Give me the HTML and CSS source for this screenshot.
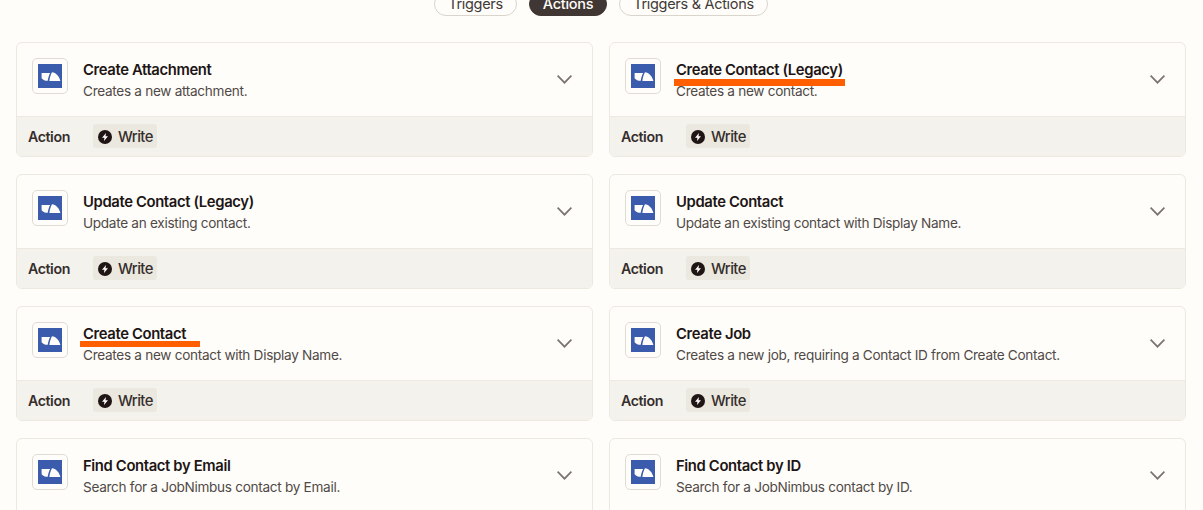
FILE: index.html
```html
<!DOCTYPE html>
<html lang="en">
<head>
<meta charset="utf-8">
<title>JobNimbus actions</title>
<link rel="stylesheet" href="styles.css">
</head>
<body>
<svg class="defs" width="0" height="0" aria-hidden="true">
  <symbol id="jn" viewBox="0 0 24 24">
    <rect width="24" height="24" fill="#3b5cad"/>
    <path d="M3.6 9H12.2C11 11 10.2 13.6 9.7 16.8C7 16.8 4.8 15.8 3.6 14.2Z" fill="#fffdf9"/>
    <path d="M14 8.3C17.8 8.7 21 12 22.4 17H11.4C11.6 14 12.6 11 14 8.3Z" fill="#fffdf9"/>
  </symbol>
  <symbol id="bolt" viewBox="0 0 14 14">
    <circle cx="7" cy="7" r="7" fill="#201515"/>
    <path d="M8 3 4 7.7H6.4L6 11 10 6.2H7.5Z" fill="#fffdf9"/>
  </symbol>
  <symbol id="chev" viewBox="0 0 15 9">
    <path d="M.6.7 7.5 7.7 14.4.7" fill="none" stroke="#7a7370" stroke-width="1.7"/>
  </symbol>
</svg>
<main class="page">
  <nav class="tabs">
    <span class="tab">Triggers</span>
    <span class="tab tab-on">Actions</span>
    <span class="tab">Triggers &amp; Actions</span>
  </nav>
  <section class="grid">
    <article class="card">
      <div class="head">
        <div class="logo"><svg class="logo-svg"><use href="#jn"/></svg></div>
        <div class="copy"><h3 class="title">Create Attachment</h3><p class="desc">Creates a new attachment.</p></div>
        <svg class="chev"><use href="#chev"/></svg>
      </div>
      <div class="foot"><span class="kind">Action</span><span class="badge"><svg class="bolt"><use href="#bolt"/></svg>Write</span></div>
    </article>
    <article class="card">
      <div class="head">
        <div class="logo"><svg class="logo-svg"><use href="#jn"/></svg></div>
        <div class="copy"><h3 class="title">Create Contact (Legacy)</h3><p class="desc">Creates a new contact.</p></div>
        <svg class="chev"><use href="#chev"/></svg>
      </div>
      <div class="foot"><span class="kind">Action</span><span class="badge"><svg class="bolt"><use href="#bolt"/></svg>Write</span></div>
      <span class="mark mark-legacy"></span>
    </article>
    <article class="card">
      <div class="head">
        <div class="logo"><svg class="logo-svg"><use href="#jn"/></svg></div>
        <div class="copy"><h3 class="title">Update Contact (Legacy)</h3><p class="desc">Update an existing contact.</p></div>
        <svg class="chev"><use href="#chev"/></svg>
      </div>
      <div class="foot"><span class="kind">Action</span><span class="badge"><svg class="bolt"><use href="#bolt"/></svg>Write</span></div>
    </article>
    <article class="card">
      <div class="head">
        <div class="logo"><svg class="logo-svg"><use href="#jn"/></svg></div>
        <div class="copy"><h3 class="title">Update Contact</h3><p class="desc">Update an existing contact with Display Name.</p></div>
        <svg class="chev"><use href="#chev"/></svg>
      </div>
      <div class="foot"><span class="kind">Action</span><span class="badge"><svg class="bolt"><use href="#bolt"/></svg>Write</span></div>
    </article>
    <article class="card">
      <div class="head">
        <div class="logo"><svg class="logo-svg"><use href="#jn"/></svg></div>
        <div class="copy"><h3 class="title">Create Contact</h3><p class="desc">Creates a new contact with Display Name.</p></div>
        <svg class="chev"><use href="#chev"/></svg>
      </div>
      <div class="foot"><span class="kind">Action</span><span class="badge"><svg class="bolt"><use href="#bolt"/></svg>Write</span></div>
      <span class="mark mark-create"></span>
    </article>
    <article class="card">
      <div class="head">
        <div class="logo"><svg class="logo-svg"><use href="#jn"/></svg></div>
        <div class="copy"><h3 class="title">Create Job</h3><p class="desc">Creates a new job, requiring a Contact ID from Create Contact.</p></div>
        <svg class="chev"><use href="#chev"/></svg>
      </div>
      <div class="foot"><span class="kind">Action</span><span class="badge"><svg class="bolt"><use href="#bolt"/></svg>Write</span></div>
    </article>
    <article class="card">
      <div class="head">
        <div class="logo"><svg class="logo-svg"><use href="#jn"/></svg></div>
        <div class="copy"><h3 class="title">Find Contact by Email</h3><p class="desc">Search for a JobNimbus contact by Email.</p></div>
        <svg class="chev"><use href="#chev"/></svg>
      </div>
      <div class="foot"><span class="kind">Action</span><span class="badge"><svg class="bolt"><use href="#bolt"/></svg>Write</span></div>
    </article>
    <article class="card">
      <div class="head">
        <div class="logo"><svg class="logo-svg"><use href="#jn"/></svg></div>
        <div class="copy"><h3 class="title">Find Contact by ID</h3><p class="desc">Search for a JobNimbus contact by ID.</p></div>
        <svg class="chev"><use href="#chev"/></svg>
      </div>
      <div class="foot"><span class="kind">Action</span><span class="badge"><svg class="bolt"><use href="#bolt"/></svg>Write</span></div>
    </article>
  </section>
</main>
</body>
</html>
```
FILE: styles.css
```css
* { box-sizing: border-box; }
html, body { margin: 0; height: 100%; overflow: hidden; background: #fffdf9; }
body { font-family: Inter, "Liberation Sans", sans-serif; color: #201515; }
.defs { display: block; height: 0; }
.page { padding: 0 17px 0 16px; }
.tabs { display: flex; justify-content: center; gap: 12px; height: 16px; align-items: flex-end; margin-bottom: 26px; }
.tab { display: block; height: 24px; line-height: 22px; padding: 0 13px; flex: none; border: 1px solid #d9d5cd; border-radius: 12px; font-size: 14.5px; letter-spacing: -0.3px; color: #403a38; }
.tab-on { background: #403633; border-color: #403633; color: #fffdf9; font-weight: 500; }
.grid { display: grid; grid-template-columns: 1fr 1fr; gap: 17px 16px; }
.card { position: relative; height: 115px; border: 1px solid #ede9e1; border-radius: 6px; overflow: hidden; background: #fffdf9; }
.head { display: flex; align-items: flex-start; height: 73px; padding: 15px 20px 0 15px; }
.logo { display: flex; align-items: center; justify-content: center; flex: none; width: 36px; height: 36px; margin-right: 15px; background: #fffdf9; border: 1.5px solid #e0dcd4; border-radius: 5px; }
.logo-svg { display: block; width: 24px; height: 24px; }
.copy { flex: 1; min-width: 0; padding-top: 1px; }
.title { margin: 0; font-size: 14.8px; line-height: 22px; font-weight: 600; letter-spacing: -0.35px; color: #201515; }
.desc { margin: -1px 0 0; font-size: 13.6px; line-height: 22px; letter-spacing: -0.3px; color: #4f4947; }
.chev { display: block; flex: none; width: 15px; height: 9px; margin-top: 17px; }
.foot { display: flex; align-items: center; height: 40px; padding: 0 0 1px 11px; background: #f4f2ed; border-top: 1px solid #ede9e1; }
.kind { width: 65px; font-size: 14.2px; font-weight: 600; letter-spacing: -0.42px; color: #352e2c; }
.badge { display: flex; align-items: center; gap: 6px; height: 24px; padding: 2px 4px 0 5px; background: #ebe8df; border-radius: 3px; font-size: 14.8px; font-weight: 500; letter-spacing: -0.55px; color: #352e2c; }
.bolt { display: block; width: 14px; height: 14px; }
.mark { position: absolute; height: 6px; background: #ff5f00; z-index: 2; }
.mark-legacy { left: 64px; top: 36px; width: 171px; height: 7px; }
.mark-create { left: 63px; top: 34px; width: 120px; }
```
